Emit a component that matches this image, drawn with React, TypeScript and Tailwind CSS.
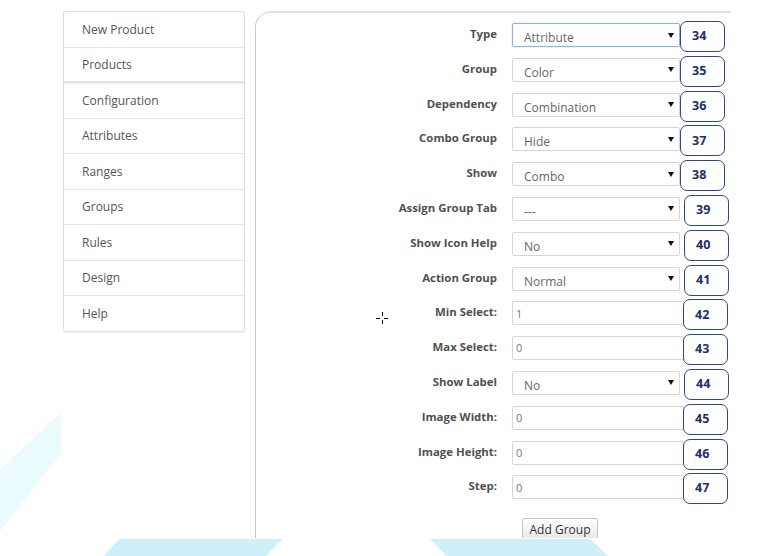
import React from "react";

type Row = {
  label: string;
  kind: "select" | "input";
  value: string;
  n: number;
  focus?: boolean;
  shift?: boolean;
};

const rows: Row[] = [
  { label: "Type", kind: "select", value: "Attribute", n: 34, focus: true },
  { label: "Group", kind: "select", value: "Color", n: 35 },
  { label: "Dependency", kind: "select", value: "Combination", n: 36 },
  { label: "Combo Group", kind: "select", value: "Hide", n: 37 },
  { label: "Show", kind: "select", value: "Combo", n: 38 },
  { label: "Assign Group Tab", kind: "select", value: "---", n: 39, shift: true },
  { label: "Show Icon Help", kind: "select", value: "No", n: 40, shift: true },
  { label: "Action Group", kind: "select", value: "Normal", n: 41, shift: true },
  { label: "Min Select:", kind: "input", value: "1", n: 42 },
  { label: "Max Select:", kind: "input", value: "0", n: 43 },
  { label: "Show Label", kind: "select", value: "No", n: 44, shift: true },
  { label: "Image Width:", kind: "input", value: "0", n: 45 },
  { label: "Image Height:", kind: "input", value: "0", n: 46 },
  { label: "Step:", kind: "input", value: "0", n: 47 },
];

const menu = [
  "New Product",
  "Products",
  "Configuration",
  "Attributes",
  "Ranges",
  "Groups",
  "Rules",
  "Design",
  "Help",
];

function Arrow() {
  return (
    <svg width="6" height="5" viewBox="0 0 6 5" className="shrink-0 self-center">
      <polygon points="0,0 6,0 3,5" fill="#111" />
    </svg>
  );
}

export default function App() {
  return (
    <div className="relative h-[556px] w-[779px] overflow-hidden bg-white font-['Open_Sans',sans-serif]">
      <svg className="absolute inset-0" width="779" height="556" viewBox="0 0 779 556">
        <polygon points="61,413 61,453 0,531 0,470" fill="#e9fbfd" />
        <polygon points="119,539 283,539 266,556 104,556" fill="#cdf0fb" />
        <polygon points="430,539 590,539 608,556 447,556" fill="#cdf0fb" />
      </svg>

      <div className="relative flex h-[538px] overflow-hidden pl-[63px] pt-[11px]">
        {/* Sidebar */}
        <div className="h-[321px] w-[182px] shrink-0 overflow-hidden rounded-[3px] border border-[#dedede] bg-white shadow-[0_1px_2px_rgba(0,0,0,0.06)]">
          {menu.map((m, i) => (
            <div
              key={m}
              className={
                "flex h-[35.5px] items-center pl-[18px] pt-[1px] text-[12px] text-[#555] " +
                (i === 1
                  ? "border-b-2 border-[#e2e2e2] shadow-[0_1px_1px_rgba(0,0,0,0.05)]"
                  : i === menu.length - 1
                  ? ""
                  : "border-b border-[#e4e4e4]")
              }
            >
              {m}
            </div>
          ))}
        </div>

        {/* Main panel */}
        <div className="ml-[10px] h-[560px] w-[476px] shrink-0 rounded-tl-[16px] border-l border-t-2 border-l-[#c9c9d0] border-t-[#e4e4e6] bg-white pt-[8px]">
          {rows.map((r) => (
            <div key={r.n} className="flex h-[34.8px] items-start">
              <div className="mt-[5px] w-[241px] shrink-0 text-right text-[11.4px] font-bold leading-[16px] text-[#505050]">
                {r.label}
              </div>
              {r.kind === "select" ? (
                <div
                  className={
                    "ml-[15px] mt-[2px] flex h-[24px] w-[168px] shrink-0 justify-between rounded-[2px] border bg-white pl-[11px] pr-[5px] " +
                    (r.focus
                      ? "border-[#86b4e6] shadow-[0_0_2px_rgba(80,150,230,0.35)]"
                      : "border-[#d6d6d6]")
                  }
                >
                  <span className="pt-[6px] text-[12px] leading-[16px] text-[#666]">{r.value}</span>
                  <Arrow />
                </div>
              ) : (
                <div className="ml-[15px] mt-[2px] flex h-[24px] w-[172px] shrink-0 items-center rounded-[2px] border border-[#d6d6d6] bg-white pl-[3px] pt-[1px] text-[11px] text-[#7a7a7a]">
                  {r.value}
                </div>
              )}
              <div
                className={
                  "relative z-10 flex h-[31px] w-[45px] shrink-0 items-center rounded-[7px] border border-[#2e4a82] bg-white pl-[11px] text-[12.5px] font-bold text-[#1b2f6a] " +
                  (r.kind === "input" ? "-ml-[1px]" : r.shift ? "ml-[4px]" : "ml-0")
                }
              >
                {r.n}
              </div>
            </div>
          ))}
          <div className="ml-[266px] mt-[8px]">
            <button className="h-[25px] w-[76px] rounded-[2px] border border-[#c4c4c4] bg-gradient-to-b from-[#ffffff] to-[#e4e4e4] text-[12px] text-[#333]">
              Add Group
            </button>
          </div>
        </div>
      </div>

      {/* cursor */}
      <svg className="absolute left-[376px] top-[312px]" width="13" height="13" viewBox="0 0 13 13">
        <line x1="6.5" y1="0" x2="6.5" y2="4" stroke="#000" strokeWidth="1" />
        <line x1="6.5" y1="8" x2="6.5" y2="12" stroke="#000" strokeWidth="1" />
        <line x1="0" y1="6.5" x2="4" y2="6.5" stroke="#000" strokeWidth="1" />
        <line x1="8" y1="6.5" x2="12" y2="6.5" stroke="#000" strokeWidth="1" />
      </svg>
    </div>
  );
}
